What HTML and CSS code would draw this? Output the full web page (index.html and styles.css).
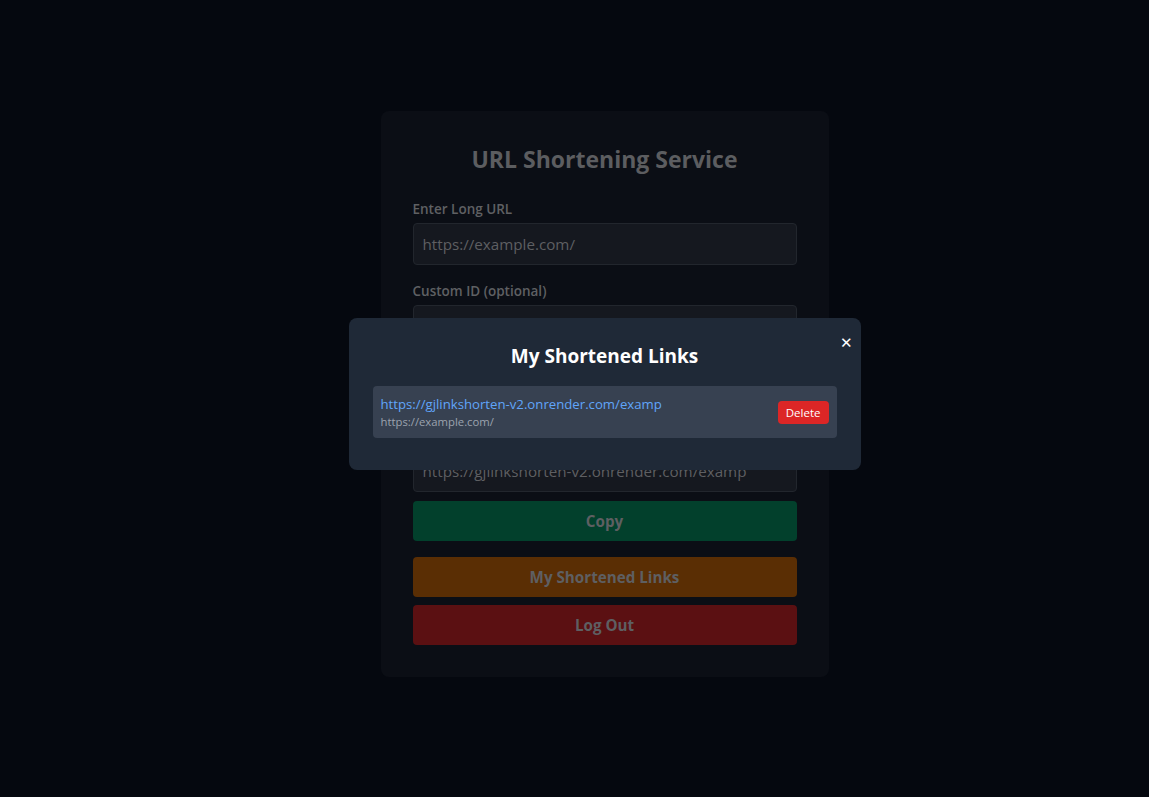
FILE: index.html
```html
<!DOCTYPE html>
<html lang="en">
<head>
<meta charset="utf-8">
<title>URL Shortening Service</title>
<link rel="stylesheet" href="styles.css">
</head>
<body>
<main class="card">
  <h1 class="title">URL Shortening Service</h1>
  <div class="group">
    <label class="label">Enter Long URL</label>
    <div class="input">https://example.com/</div>
  </div>
  <div class="group">
    <label class="label">Custom ID (optional)</label>
    <div class="input"></div>
  </div>
  <button class="btn btn-blue">Shorten URL</button>
  <div class="result">
    <label class="label">Shortened URL</label>
    <div class="input">https://gjlinkshorten-v2.onrender.com/examp</div>
    <button class="btn btn-green">Copy</button>
  </div>
  <button class="btn btn-yellow">My Shortened Links</button>
  <button class="btn btn-red">Log Out</button>
</main>

<div class="overlay">
  <div class="modal">
    <button class="close">&#x2715;</button>
    <h2 class="modal-title">My Shortened Links</h2>
    <div class="link-item">
      <div class="link-text">
        <a class="short">https://gjlinkshorten-v2.onrender.com/examp</a>
        <div class="orig">https://example.com/</div>
      </div>
      <button class="delete">Delete</button>
    </div>
  </div>
</div>
</body>
</html>
```
FILE: styles.css
```css
* { box-sizing: border-box; }
html, body { margin: 0; padding: 0; }
body {
  background: #05080f;
  font-family: "Open Sans", "Noto Sans", sans-serif;
  min-height: 797px;
  padding-left: 60px;
}
.card {
  width: 448px;
  margin: 111px auto 0;
  background: #0b0e15;
  border-radius: 8px;
  padding: 32px;
  display: flex;
  flex-direction: column;
}
.title {
  margin: 0 0 24px;
  text-align: center;
  font-size: 23px;
  line-height: 32px;
  font-weight: 700;
  color: #5c5d60;
}
.group { margin-bottom: 16px; display: flex; flex-direction: column; }
.label {
  font-size: 13.5px;
  line-height: 20px;
  font-weight: 600;
  color: #5f6063;
  margin-bottom: 4px;
}
.input {
  height: 42px;
  background: #15181f;
  border: 1px solid #22262d;
  border-radius: 4px;
  padding: 0 9px;
  font-size: 15.2px;
  line-height: 40px;
  color: #5e5f62;
  white-space: nowrap;
  overflow: hidden;
}
.btn {
  height: 40px;
  border: 0;
  border-radius: 4px;
  font-family: inherit;
  font-size: 15.2px;
  font-weight: 700;
  color: #5e5f62;
  width: 100%;
}
.btn-blue { background: #0f2c5e; }
.result { margin-top: 23px; display: flex; flex-direction: column; }
.btn-green { background: #02402c; margin-top: 9px; }
.btn-yellow { background: #5a2e04; margin-top: 16px; }
.btn-red { background: #5b1012; margin-top: 8px; }

.overlay {
  position: fixed;
  inset: 0;
  display: flex;
  justify-content: center;
  align-items: flex-start;
  padding-top: 318px;
  padding-left: 60px;
}
.modal {
  position: relative;
  width: 512px;
  background: #1f2937;
  border-radius: 8px;
  padding: 24px 24px 32px;
}
.close {
  position: absolute;
  top: 14px;
  right: 4px;
  background: none;
  border: 0;
  color: #ffffff;
  font-size: 15px;
  line-height: 18px;
  font-weight: 700;
  font-family: "DejaVu Sans", sans-serif;
  padding: 2px 4px;
}
.modal-title {
  margin: 0 0 16px;
  text-align: center;
  font-size: 19px;
  line-height: 28px;
  font-weight: 700;
  color: #ffffff;
}
.link-item {
  background: #374151;
  border-radius: 4px;
  padding: 8px;
  display: flex;
  align-items: center;
  justify-content: space-between;
}
.link-text { display: flex; flex-direction: column; }
.short {
  font-size: 13.2px;
  line-height: 20px;
  color: #60a5fa;
}
.orig {
  font-size: 11.3px;
  line-height: 16px;
  color: #9ca3af;
}
.delete {
  background: #dc2626;
  color: #ffffff;
  border: 0;
  border-radius: 4px;
  font-family: inherit;
  font-size: 11.5px;
  line-height: 15px;
  padding: 4px 8px;
}
```
